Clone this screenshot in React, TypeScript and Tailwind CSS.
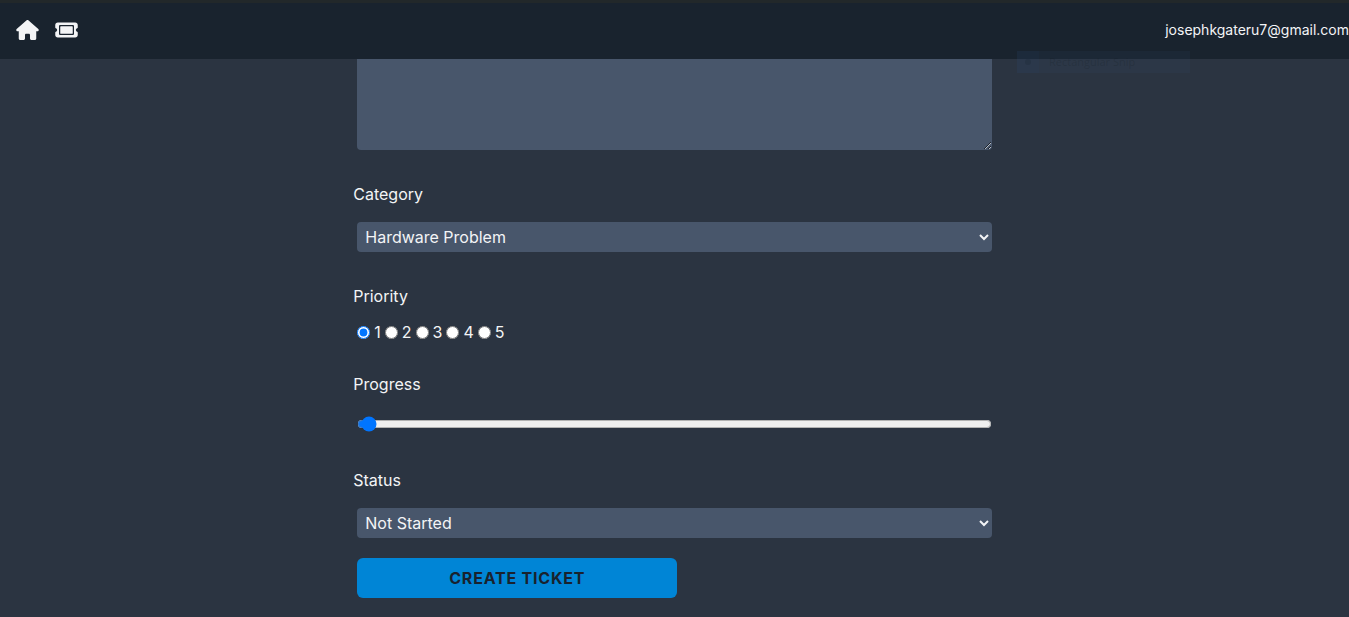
import { useState } from "react";
import { FaHouse, FaTicket } from "react-icons/fa6";

const fieldClass = "mx-1 mt-4 mb-1 h-[30px] rounded bg-[#48566b] px-1 text-base text-gray-100";

function Nav() {
  return (
    <nav className="flex h-[59px] items-center justify-between border-t-3 border-[#22282a] bg-[#19232e] pb-0.5 pl-4">
      <div className="flex items-center gap-4">
        <a href="#home" aria-label="Home">
          <FaHouse className="h-5 w-[23px] text-gray-100" />
        </a>
        <a href="#new-ticket" aria-label="New ticket">
          <FaTicket className="h-5 w-[23px] text-gray-100" />
        </a>
      </div>
      <p className="text-sm text-gray-100">josephkgateru7@gmail.com</p>
    </nav>
  );
}

function SnipHint() {
  return (
    <div className="pointer-events-none absolute top-[51px] right-[159px] flex h-[22px] w-[173px] items-center bg-[#3b5572]/12 font-['Open_Sans',sans-serif] text-[11px] text-[#101820]/20">
      <span className="flex h-full w-[22px] items-center justify-center bg-[#205080]/8">
        <span className="size-1.5 rounded-full bg-[#101820]/15" />
      </span>
      <span className="pl-2.5">Rectangular Snip</span>
    </div>
  );
}

export default function App() {
  const [priority, setPriority] = useState(1);
  const [progress, setProgress] = useState(0);

  return (
    <div className="relative min-h-screen bg-[#2b3441] font-[Inter,sans-serif] text-base text-gray-100">
      <Nav />
      <SnipHint />
      <main className="flex justify-center px-8">
        <form className="flex w-full flex-col md:w-1/2" onSubmit={(e) => e.preventDefault()}>
          <textarea
            aria-label="Description"
            name="description"
            className="mx-1 h-[91px] rounded-b bg-[#48566b] px-2 py-1"
          />

          <label htmlFor="category" className="mt-8">Category</label>
          <select id="category" name="category" className={fieldClass}>
            <option>Hardware Problem</option>
            <option>Software Problem</option>
            <option>Project</option>
          </select>

          <fieldset className="mt-7">
            <legend>Priority</legend>
            <div className="mt-3 flex">
              {[1, 2, 3, 4, 5].map((n) => (
                <label key={n} className="flex items-center">
                  <input
                    type="radio"
                    name="priority"
                    value={n}
                    checked={priority === n}
                    onChange={() => setPriority(n)}
                    className="m-1"
                  />
                  {n}
                </label>
              ))}
            </div>
          </fieldset>

          <label htmlFor="progress" className="mt-7">Progress</label>
          <input
            id="progress"
            name="progress"
            type="range"
            min={0}
            max={100}
            value={progress}
            onChange={(e) => setProgress(Number(e.target.value))}
            className="mx-1 mt-4 p-1"
          />

          <label htmlFor="status" className="mt-8">Status</label>
          <select id="status" name="status" className={fieldClass}>
            <option>Not Started</option>
            <option>Started</option>
            <option>Done</option>
          </select>

          <button
            type="submit"
            className="mx-1 mt-4 mb-4 h-10 w-80 max-w-full rounded-md bg-[#0085d6] font-bold tracking-wider text-[#19222e] uppercase"
          >
            Create Ticket
          </button>
        </form>
      </main>
    </div>
  );
}
